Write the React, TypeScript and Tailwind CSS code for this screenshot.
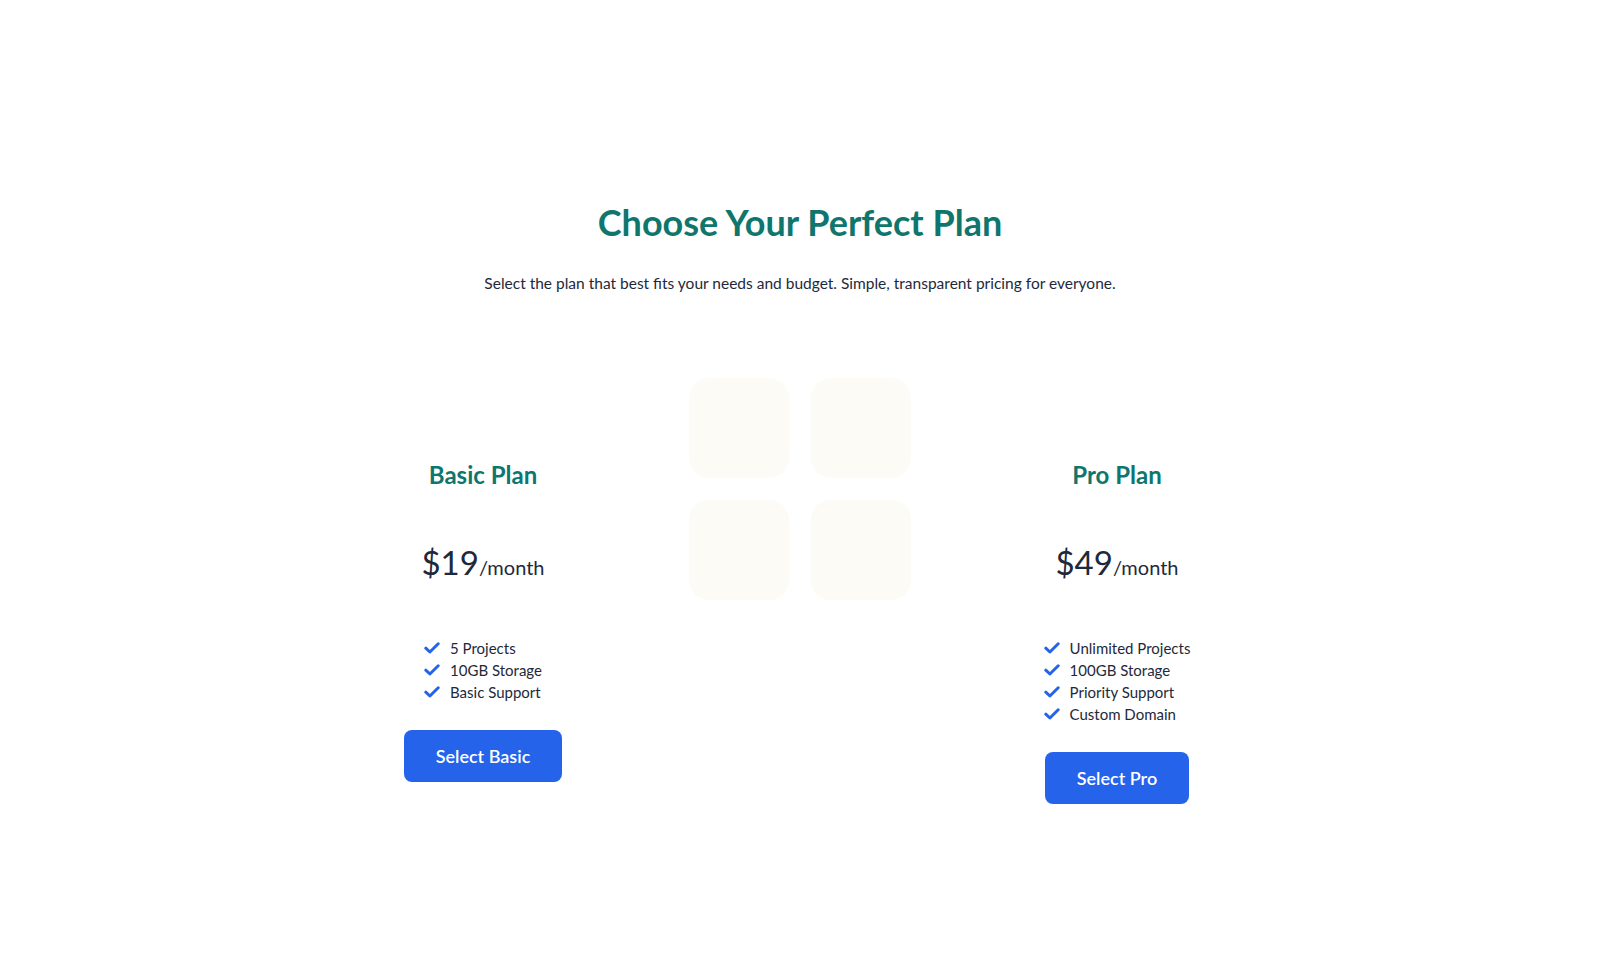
import type { ReactNode } from "react";

type Plan = {
  name: string;
  price: string;
  features: string[];
  cta: string;
};

const plans: Plan[] = [
  { name: "Basic Plan", price: "$19", features: ["5 Projects", "10GB Storage", "Basic Support"], cta: "Select Basic" },
  { name: "Pro Plan", price: "$49", features: ["Unlimited Projects", "100GB Storage", "Priority Support", "Custom Domain"], cta: "Select Pro" },
];

function CheckIcon() {
  return (
    <svg width="16" height="12" viewBox="0 0 16 12" fill="none" className="shrink-0">
      <path d="M1.8 6.2 5.9 10 14.2 1.8" stroke="#2563eb" strokeWidth="3" strokeLinecap="round" strokeLinejoin="round" />
    </svg>
  );
}

function PlanCard({ plan }: { plan: Plan }) {
  return (
    <div className="flex flex-col items-center pt-[81px]">
      <h2 className="text-2xl font-bold text-[#0f766e]">{plan.name}</h2>
      <div className="mt-[51px] flex items-baseline text-[#1e293b]">
        <span className="text-[33px] leading-10">{plan.price}</span>
        <span className="text-xl">/month</span>
      </div>
      <ul className="mt-[55px] text-[15px] leading-[22px] text-[#1e293b]">
        {plan.features.map((feature) => (
          <li key={feature} className="flex items-center gap-[10px]">
            <CheckIcon />
            {feature}
          </li>
        ))}
      </ul>
      <button className="mt-[27px] rounded-lg bg-[#2563eb] px-8 py-3 text-lg font-semibold text-white">{plan.cta}</button>
    </div>
  );
}

function Tile({ children }: { children?: ReactNode }) {
  return <div className="h-[100px] w-[100px] rounded-[20px] bg-[#fcfbf5]">{children}</div>;
}

export default function App() {
  return (
    <main className="min-h-screen bg-white pt-[202px] font-['Lato',sans-serif]">
      <div className="text-center">
        <h1 className="text-[36px] leading-10 font-bold text-[#0f766e]">Choose Your Perfect Plan</h1>
        <p className="mt-[29px] text-[15.5px] leading-6 text-[#1e293b]">
          Select the plan that best fits your needs and budget. Simple, transparent pricing for everyone.
        </p>
      </div>

      <section className="mx-auto mt-[83px] grid w-[951px] grid-cols-3 items-start">
        <PlanCard plan={plans[0]} />
        <div className="flex justify-center">
          <div className="grid grid-cols-2 gap-[22px]">
            <Tile />
            <Tile />
            <Tile />
            <Tile />
          </div>
        </div>
        <PlanCard plan={plans[1]} />
      </section>
    </main>
  );
}
